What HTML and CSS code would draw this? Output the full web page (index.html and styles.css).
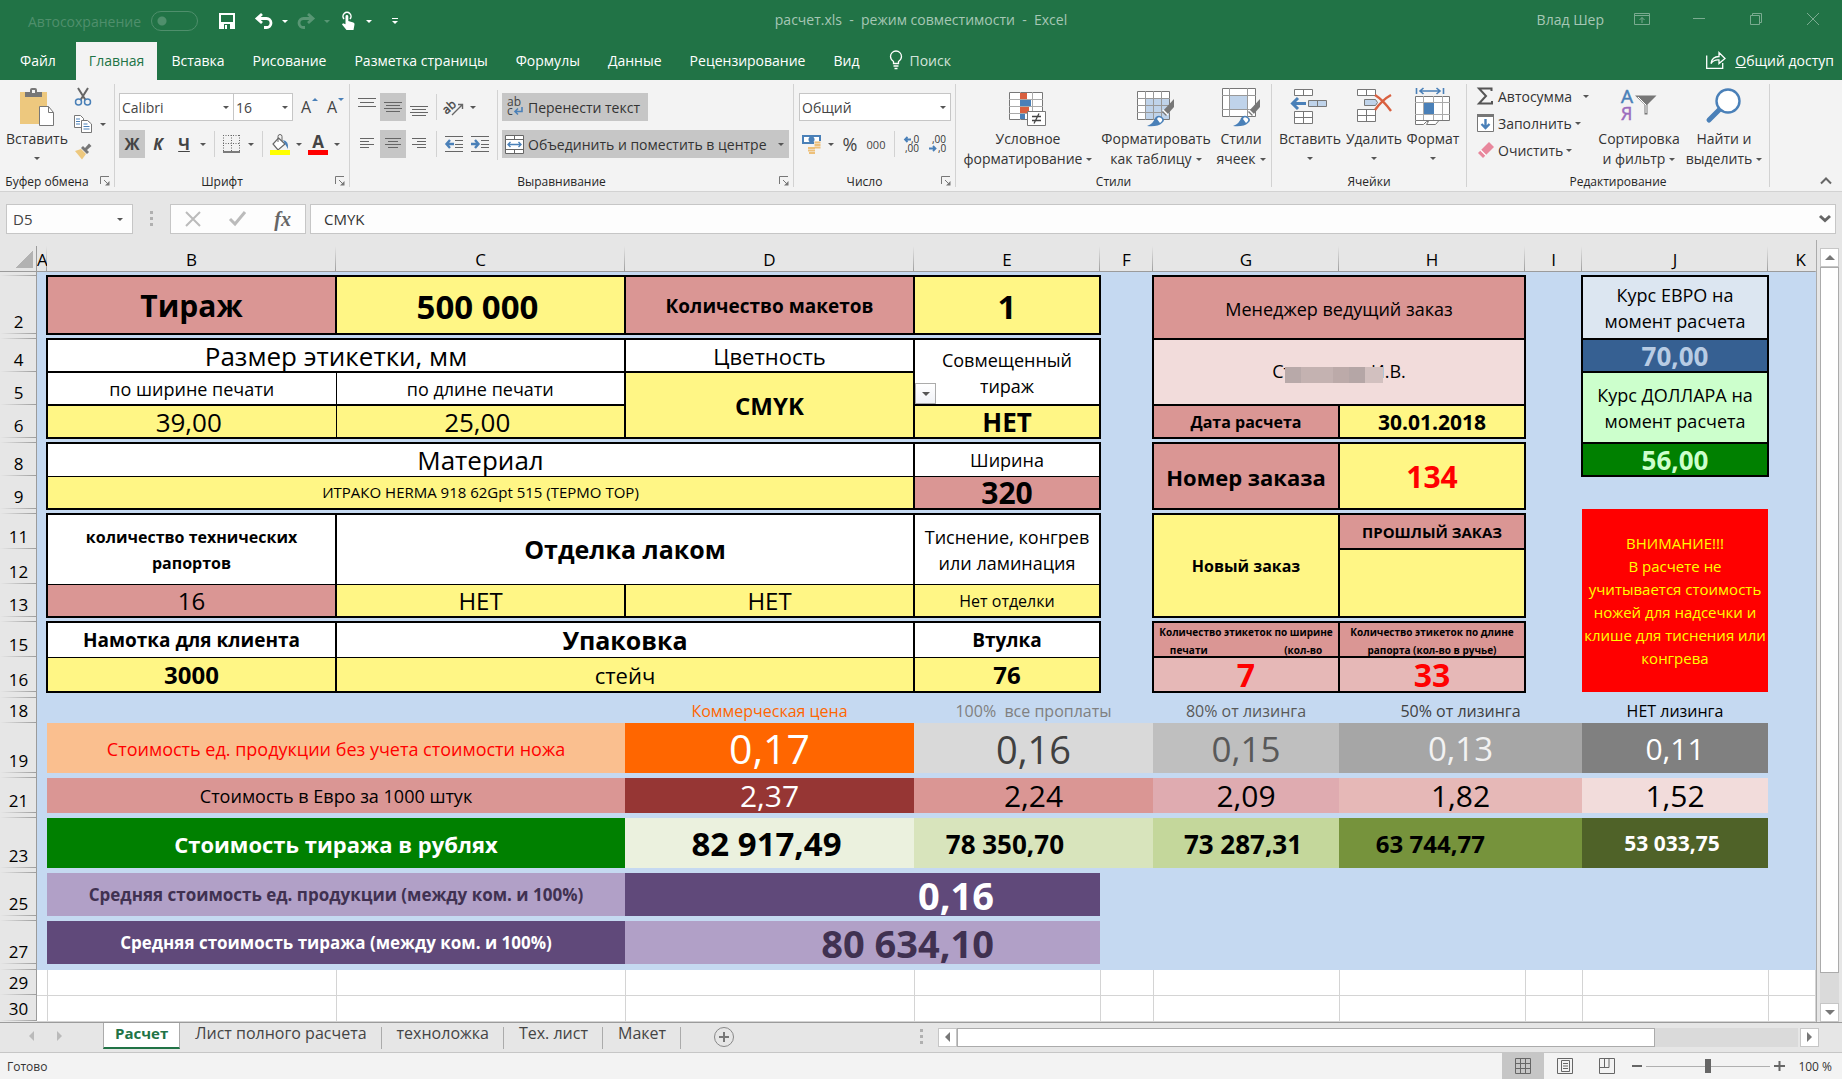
FILE: index.html
```html
<!DOCTYPE html>
<html lang="ru">
<head>
<meta charset="utf-8">
<meta name="viewport" content="width=device-width, initial-scale=1">
<title>расчет.xls - режим совместимости - Excel</title>
<link rel="stylesheet" href="styles.css">
</head>
<body>
<header class="titlebar">
  <div class="quick">
    <label class="autosave" for="autosave">Автосохранение</label>
    <input class="toggle" type="checkbox" id="autosave" disabled>
    <button class="qbtn save" aria-label="Сохранить"><svg width="16" height="16" viewBox="0 0 16 16"><path d="M1 1h14v14H1z" fill="none" stroke="#fff" stroke-width="2"/><path d="M2 9h12v6H2z" fill="#fff"/><path d="M5 11h6v5H5z" fill="#217346"/><path d="M6 12h2v4H6z" fill="#fff"/></svg></button>
    <button class="qbtn" aria-label="Отменить"><svg width="18" height="16" viewBox="0 0 18 16"><path d="M7 1L2 5.500l5 4.500M2 5.500h9.500a4.500 4.500 0 0 1 0 9H9" fill="none" stroke="#fff" stroke-width="2.800"/></svg></button>
    <button class="qdrop" aria-label="Список отмены"><i class="caret"></i></button>
    <button class="qbtn dim" aria-label="Повторить"><svg width="18" height="16" viewBox="0 0 18 16"><path d="M11 1l5 4.500L11 10M16 5.500H6.500a4.500 4.500 0 0 0 0 9H8" fill="none" stroke="#fff" stroke-width="2.800"/></svg></button>
    <button class="qdrop dim" aria-label="Список повтора"><i class="caret"></i></button>
    <button class="qbtn" aria-label="Режим касания"><svg width="15" height="18" viewBox="0 0 15 18"><path d="M3 7a4 4 0 1 1 6 0" fill="none" stroke="#fff" stroke-width="1.500"/><path d="M4.500 4.500a1.400 1.400 0 0 1 2.800 0V9l5 1.500q1.500.6 1.200 2L12.500 18H5.500L1 12.500l1-1.200 2.500 1z" fill="#fff"/></svg></button>
    <button class="qdrop" aria-label="Режимы"><i class="caret"></i></button>
    <button class="qdrop more" aria-label="Настройка панели"><i class="bar"></i><i class="caret"></i></button>
  </div>
  <div class="doc-title">расчет.xls&nbsp; -&nbsp; режим совместимости&nbsp; -&nbsp; Excel</div>
  <div class="window-tools">
    <span class="user">Влад Шер</span>
    <button aria-label="Параметры ленты"><svg width="16" height="12" viewBox="0 0 16 12"><path d="M.5.5h15v11H.5zM.5 2.500h15M8 10V4.500M5.500 7L8 4.500 10.500 7" fill="none" stroke="#fff"/></svg></button>
    <button aria-label="Свернуть"><svg width="12" height="12" viewBox="0 0 12 12"><path d="M0 5.500h12" stroke="#fff"/></svg></button>
    <button aria-label="Восстановить"><svg width="12" height="12" viewBox="0 0 12 12"><path d="M.5 2.500h9v9h-9zM2.500 2.500v-2h9v9h-2" fill="none" stroke="#fff"/></svg></button>
    <button aria-label="Закрыть"><svg width="12" height="12" viewBox="0 0 12 12"><path d="M0 0l12 12M12 0L0 12" stroke="#fff"/></svg></button>
  </div>
</header>
<nav class="tabs">
  <a href="#file">Файл</a>
  <a href="#home" class="active">Главная</a>
  <a href="#insert">Вставка</a>
  <a href="#draw">Рисование</a>
  <a href="#layout">Разметка страницы</a>
  <a href="#formulas">Формулы</a>
  <a href="#data">Данные</a>
  <a href="#review">Рецензирование</a>
  <a href="#view">Вид</a>
  <a href="#search" class="search"><svg width="14" height="20" viewBox="0 0 14 20"><path d="M4.500 13.500v-2Q1.500 9.500 1.500 6.500a5.500 5.500 0 0 1 11 0q0 3-3 5v2zM4.500 16h5M5.500 18.500h3" fill="none" stroke="#fff" stroke-width="1.300"/></svg>Поиск</a>
  <a href="#share" class="share"><svg width="20" height="18" viewBox="0 0 20 18"><path d="M.7 4.500v12.800h16V12" fill="none" stroke="#fff" stroke-width="1.300"/><path d="M5 12.500q1-7 8-7V1.500L19 7.500l-6 5V9q-5-.5-8 3.500z" fill="none" stroke="#fff" stroke-width="1.300"/></svg><span><u>О</u>бщий доступ</span></a>
</nav>

<section class="ribbon" aria-label="Лента">
  <div class="group g-clip">
    <div class="body">
      <button class="big paste"><svg width="36" height="40" viewBox="0 0 36 40"><path d="M1 4h27v32H1z" fill="#edc87e"/><path d="M6 4h5V2q0-2 2-2h3q2 0 2 2v2h5v5H6z" fill="#777"/><path d="M13 2h3v3h-3z" fill="#f3f3f3"/><path d="M20.500 18.500h9l5 6v13h-14z" fill="#fff" stroke="#777"/><path d="M29.500 18.500v6h5" fill="none" stroke="#777"/></svg><span>Вставить</span><i class="caret"></i></button>
      <div class="stack">
        <button class="mini" aria-label="Вырезать"><svg width="18" height="18" viewBox="0 0 18 18"><path d="M4 0l7.500 12M14 0L6.500 12" stroke="#666" stroke-width="2"/><circle cx="4.500" cy="14" r="3" fill="none" stroke="#4a80b8" stroke-width="1.500"/><circle cx="13.500" cy="14" r="3" fill="none" stroke="#4a80b8" stroke-width="1.500"/></svg></button>
        <button class="mini" aria-label="Копировать"><svg width="18" height="18" viewBox="0 0 18 18"><path d="M.5.500h6l3 3v9h-9z" fill="#fff" stroke="#777"/><path d="M2 4h4M2 6.500h4M2 9h4" stroke="#4a80b8"/><path d="M7.500 5.500h6l4 3.500v8.500h-10z" fill="#fff" stroke="#777"/><path d="M9.500 9h4M9.500 11.500h6M9.500 14h6" stroke="#4a80b8"/></svg><i class="caret"></i></button>
        <button class="mini" aria-label="Формат по образцу"><svg width="18" height="18" viewBox="0 0 18 18"><path d="M1 9l6-2 5 5-4 5.500z" fill="#edc87e"/><path d="M7 6l2-2 2 2 4-4.500L17.500 4 13 8l2 2-2 2z" fill="#777"/></svg></button>
      </div>
    </div>
    <div class="caption has-launcher">Буфер обмена<button class="launcher" aria-label="Буфер обмена: параметры"><svg width="10" height="10" viewBox="0 0 10 10"><path d="M.5 8V.500H9M4 4l4 4" fill="none" stroke="#777"/><path d="M9.500 5v4.500H5z" fill="#777"/></svg></button></div>
  </div>

  <div class="group g-font">
    <div class="body rows">
      <div class="row">
        <select class="combo font-name" aria-label="Шрифт"><option>Calibri</option></select>
        <select class="combo font-size" aria-label="Размер шрифта"><option>16</option></select>
        <button class="tool" aria-label="Увеличить размер"><span class="grow">A</span><i class="tri up"></i></button>
        <button class="tool" aria-label="Уменьшить размер"><span class="grow">A</span><i class="tri down"></i></button>
      </div>
      <div class="row">
        <button class="tool on"><b>Ж</b></button>
        <button class="tool"><b><em>К</em></b></button>
        <button class="tool"><b><u>Ч</u></b></button>
        <button class="drop" aria-label="Подчеркивание"><i class="caret"></i></button>
        <i class="sep"></i>
        <button class="tool" aria-label="Границы"><svg width="18" height="18" viewBox="0 0 18 18"><path d="M.5 0v16M8.500 0v16M16.500 0v16M0 .500h17M0 8.500h17" stroke="#666" stroke-dasharray="1 1.500"/><path d="M0 17h17" stroke="#555" stroke-width="1.500"/></svg></button>
        <button class="drop" aria-label="Виды границ"><i class="caret"></i></button>
        <i class="sep"></i>
        <button class="tool" aria-label="Цвет заливки"><svg width="20" height="21" viewBox="0 0 20 21"><path d="M8.500 4L15 10l-7 6-5-6z" fill="#fff" stroke="#666" stroke-width="1.200"/><path d="M8 8V2.500q0-2 2-2t2 2V7" fill="none" stroke="#666"/><path d="M13 6q6 1 5 9l-3-5z" fill="#4a80b8"/><path d="M0 16h20v5H0z" fill="#ff0"/></svg></button>
        <button class="drop" aria-label="Цвета заливки"><i class="caret"></i></button>
        <button class="tool fontcolor" aria-label="Цвет текста"><b>А</b><i class="swatch"></i></button>
        <button class="drop" aria-label="Цвета текста"><i class="caret"></i></button>
      </div>
    </div>
    <div class="caption has-launcher">Шрифт<button class="launcher" aria-label="Шрифт: параметры"><svg width="10" height="10" viewBox="0 0 10 10"><path d="M.5 8V.500H9M4 4l4 4" fill="none" stroke="#777"/><path d="M9.500 5v4.500H5z" fill="#777"/></svg></button></div>
  </div>

  <div class="group g-align">
    <div class="body">
      <div class="rows">
        <div class="row">
          <button class="tool" aria-label="По верхнему краю"><svg width="18" height="18" viewBox="0 0 18 18"><path d="M0 .500h18M2 4.500h14M0 8.500h18" stroke="#666"/></svg></button>
          <button class="tool on" aria-label="По середине"><svg width="18" height="18" viewBox="0 0 18 18"><path d="M0 4.500h18M2 7.500h14M0 10.500h18M2 13.500h14" stroke="#666"/></svg></button>
          <button class="tool" aria-label="По нижнему краю"><svg width="18" height="18" viewBox="0 0 18 18"><path d="M0 8.500h18M2 11.500h14M0 14.500h18M2 17.500h14" stroke="#666"/></svg></button>
          <i class="sep"></i>
          <button class="tool" aria-label="Ориентация"><svg width="20" height="18" viewBox="0 0 20 18"><text x="-2" y="13" font-size="12" transform="rotate(-42 5 9)" fill="#444" stroke="#444" stroke-width=".4">ab</text><path d="M8 17L18 7M14 6.500h4.500V11" fill="none" stroke="#666" stroke-width="1.400"/></svg></button>
          <button class="drop" aria-label="Варианты ориентации"><i class="caret"></i></button>
        </div>
        <div class="row">
          <button class="tool" aria-label="По левому краю"><svg width="14" height="14" viewBox="0 0 14 14"><path d="M0 1.500h14M0 4.500h9M0 7.500h14M0 10.500h9" stroke="#666"/></svg></button>
          <button class="tool on" aria-label="По центру"><svg width="16" height="14" viewBox="0 0 16 14"><path d="M0 1.500h16M3 4.500h10M0 7.500h16M3 10.500h10" stroke="#666"/></svg></button>
          <button class="tool" aria-label="По правому краю"><svg width="14" height="14" viewBox="0 0 14 14"><path d="M0 1.500h14M5 4.500h9M0 7.500h14M5 10.500h9" stroke="#666"/></svg></button>
          <i class="sep"></i>
          <button class="tool" aria-label="Уменьшить отступ"><svg width="18" height="18" viewBox="0 0 18 18"><path d="M0 1.500h18M10 5.500h8M10 9.500h8M10 12.500h8M0 16.500h18" stroke="#666"/><path d="M9 9H2M5 5L1.500 9 5 13" fill="none" stroke="#4a80b8" stroke-width="2.400"/></svg></button>
          <button class="tool" aria-label="Увеличить отступ"><svg width="18" height="18" viewBox="0 0 18 18"><path d="M0 1.500h18M10 5.500h8M10 9.500h8M10 12.500h8M0 16.500h18" stroke="#666"/><path d="M0 9h7M4 5l3.500 4L4 13" fill="none" stroke="#4a80b8" stroke-width="2.400"/></svg></button>
        </div>
      </div>
      <i class="sep tall"></i>
      <div class="rows">
        <button class="wide on"><svg width="18" height="20" viewBox="0 0 18 20"><text x="1" y="9" font-size="12" fill="#444">ab</text><text x="1" y="18" font-size="12" fill="#444">c</text><path d="M16 10v4.500H9M12 11.500l-3 3 3 3" fill="none" stroke="#4a80b8" stroke-width="1.600"/></svg>Перенести текст</button>
        <button class="wide on merge"><svg width="19" height="19" viewBox="0 0 19 19"><path d="M.5.500h18v18H.500zM.5 4.500h18M.5 14.500h18M9.500.500v4M9.500 14.500v4" fill="#fff" stroke="#666"/><path d="M3 9.500h13M5.500 7L3 9.500 5.500 12M13.500 7L16 9.500 13.500 12" fill="none" stroke="#4a80b8" stroke-width="1.400"/></svg>Объединить и поместить в центре<i class="caret"></i></button>
      </div>
    </div>
    <div class="caption has-launcher">Выравнивание<button class="launcher" aria-label="Выравнивание: параметры"><svg width="10" height="10" viewBox="0 0 10 10"><path d="M.5 8V.500H9M4 4l4 4" fill="none" stroke="#777"/><path d="M9.500 5v4.500H5z" fill="#777"/></svg></button></div>
  </div>

  <div class="group g-number">
    <div class="body rows">
      <div class="row"><select class="combo format" aria-label="Числовой формат"><option>Общий</option></select></div>
      <div class="row">
        <button class="tool" aria-label="Финансовый формат"><svg width="20" height="20" viewBox="0 0 20 20"><path d="M0 1h19v9H0z" fill="#4a80b8"/><path d="M2 3h15v5H2z" fill="#fff"/><circle cx="9.500" cy="5.500" r="3" fill="#4a80b8"/><path d="M12 7h7v10h-7z" fill="#f3f3f3"/><path d="M12.500 8.500h6M12.500 11h6M12.500 13.500h6M6 14h7M6 16.500h7M7 19h6" stroke="#edc07a" stroke-width="2"/></svg></button>
        <button class="drop" aria-label="Финансовые форматы"><i class="caret"></i></button>
        <button class="tool percent">%</button>
        <button class="tool small">000</button>
        <i class="sep"></i>
        <button class="tool" aria-label="Увеличить разрядность"><svg width="18" height="20" viewBox="0 0 18 20"><text x="8" y="9" font-size="10" fill="#333">,0</text><text x="2" y="18" font-size="10" fill="#333">,00</text><path d="M8 5.500H2M4.500 3L2 5.500 4.500 8" fill="none" stroke="#4a80b8" stroke-width="1.800"/></svg></button>
        <button class="tool" aria-label="Уменьшить разрядность"><svg width="18" height="20" viewBox="0 0 18 20"><text x="3" y="9" font-size="10" fill="#333">,00</text><text x="9" y="18" font-size="10" fill="#333">,0</text><path d="M0 14.500h6M4 12l2.500 2.500L4 17" fill="none" stroke="#4a80b8" stroke-width="1.800"/></svg></button>
      </div>
    </div>
    <div class="caption has-launcher">Число<button class="launcher" aria-label="Число: параметры"><svg width="10" height="10" viewBox="0 0 10 10"><path d="M.5 8V.500H9M4 4l4 4" fill="none" stroke="#777"/><path d="M9.500 5v4.500H5z" fill="#777"/></svg></button></div>
  </div>

  <div class="group g-styles">
    <div class="body">
      <button class="big cond"><svg width="38" height="40" viewBox="0 0 38 40"><path d="M.5 4.500h33v27H.500z" fill="#fff" stroke="#777"/><path d="M0 11.500h34M0 18.500h34M0 25.500h34M11.500 4v28M23.500 4v28" stroke="#aaa"/><path d="M11 5h7v6h-7zM11 19h9v6h-9z" fill="#d9603f"/><path d="M11 12h11v6H11zM11 26h5v5h-5z" fill="#4a80b8"/><path d="M18.500 23.500h18v14h-18z" fill="#fff" stroke="#777"/><path d="M23 28.500h9M23 32.500h9M30 25.500l-5 10" stroke="#444" stroke-width="1.300"/></svg><span>Условное</span><span>форматирование <i class="caret"></i></span></button>
      <button class="big fmt"><svg width="38" height="40" viewBox="0 0 38 40"><path d="M.5 3.500h32v28H.500z" fill="#fff" stroke="#777"/><path d="M9 11h23v20H9z" fill="#bfd3ea"/><path d="M0 10.500h33M0 17.500h33M0 24.500h33M8.500 3v29M16.500 3v29M24.500 3v29" stroke="#999"/><path d="M37 11v8l-8 9-4-4z" fill="#777"/><path d="M26 22l5 5" stroke="#fff" stroke-width="1.500"/><path d="M10 38q7-3 8-8 3-4 7-1t0 6q-4 4-15 3z" fill="#4a80b8"/><path d="M20 31q1-3 4-1t-1 5z" fill="#fff"/></svg><span>Форматировать</span><span>как таблицу <i class="caret"></i></span></button>
      <button class="big cells"><svg width="38" height="40" viewBox="0 0 38 40"><path d="M.5.500h33v28H.500z" fill="#fff" stroke="#777"/><path d="M0 7.500h34M0 21.500h34M7.500 0v29M25.500 0v29" stroke="#999"/><path d="M8 8h17v13H8z" fill="#bfd3ea"/><path d="M38 11v8l-8 9-4-4z" fill="#777"/><path d="M27 22l5 5" stroke="#fff" stroke-width="1.500"/><path d="M11 38q7-3 8-8 3-4 7-1t0 6q-4 4-15 3z" fill="#4a80b8"/><path d="M21 31q1-3 4-1t-1 5z" fill="#fff"/></svg><span>Стили</span><span>ячеек <i class="caret"></i></span></button>
    </div>
    <div class="caption">Стили</div>
  </div>

  <div class="group g-cells">
    <div class="body">
      <button class="big ins"><svg width="38" height="40" viewBox="0 0 38 40"><path d="M3.500 1.500h18v6h-18zM12.500 1.500v6M3.500 23.500h18v12h-18zM12.500 23.500v12M3.500 29.500h18" fill="#fff" stroke="#777"/><path d="M17.500 12.500h18v6h-18z" fill="#bfd3ea" stroke="#777"/><path d="M26.500 12.500v6" stroke="#777"/><path d="M15 15.500H2M7 10l-5.500 5.500L7 21" fill="none" stroke="#4a80b8" stroke-width="3"/></svg><span>Вставить</span><i class="caret"></i></button>
      <button class="big del"><svg width="38" height="40" viewBox="0 0 38 40"><path d="M2.500 1.500h18v6h-18zM11.500 1.500v6M2.500 21.500h18v12h-18zM11.500 21.500v12M2.500 27.500h18" fill="#fff" stroke="#777"/><path d="M9.500 11.500h11l2 3-2 3h-11z" fill="#bfd3ea" stroke="#777"/><path d="M20 7q8 5 16 16M36 7q-9 5-16 15" fill="none" stroke="#d9603f" stroke-width="2.400"/></svg><span>Удалить</span><i class="caret"></i></button>
      <button class="big form"><svg width="36" height="40" viewBox="0 0 36 40"><path d="M1.500 0v6M28.500 0v6M5 3h20M8.500 0L5 3l3.500 3M21.500 0L25 3l-3.500 3" fill="none" stroke="#4a80b8" stroke-width="1.600"/><path d="M.5 8.500h34v24H.500z" fill="#fff" stroke="#777"/><path d="M0 14.500h35M0 26.500h35M8.500 8v24M18.500 8v24M27.500 8v24" stroke="#aaa"/><path d="M9 15h10v11H9z" fill="#4a80b8"/><path d="M.5 33v3.500h8l3-3h2l-2 3h9l3-3.500" fill="#fff" stroke="#777"/></svg><span>Формат</span><i class="caret"></i></button>
    </div>
    <div class="caption">Ячейки</div>
  </div>

  <div class="group g-edit">
    <div class="body">
      <div class="list">
        <button class="line"><svg width="18" height="18" viewBox="0 0 18 18"><path d="M14.500 4V1.500H2L9 9l-7 7.500h13V14" fill="none" stroke="#555" stroke-width="2"/></svg>Автосумма <i class="caret far"></i></button>
        <button class="line"><svg width="18" height="18" viewBox="0 0 18 18"><path d="M.5.500h16v17H.500z" fill="#fff" stroke="#777"/><path d="M0 0h17v3H0z" fill="#777"/><path d="M8.500 5v9M4.500 10l4 4 4-4" fill="none" stroke="#4a80b8" stroke-width="2.400"/></svg>Заполнить <i class="caret"></i></button>
        <button class="line"><svg width="18" height="18" viewBox="0 0 18 18"><path d="M1 12L12 1l5 5L6 17z" fill="#e8879c"/><path d="M3.500 9l5.500 5.500" stroke="#fff" stroke-width="1.200"/></svg>Очистить <i class="caret"></i></button>
      </div>
      <button class="big sort"><svg width="36" height="40" viewBox="0 0 36 40"><path d="M14 7.500h21.500l-9 9v10h-3v-10z" fill="#777"/><path d="M17 9l8 8v8" fill="none" stroke="#fff"/><text x="0" y="15" font-size="19" fill="#4a80b8" stroke="#4a80b8" stroke-width=".5">А</text><text x="0" y="32" font-size="18" fill="#9b6bbd" stroke="#9b6bbd" stroke-width=".5">Я</text></svg><span>Сортировка</span><span>и фильтр <i class="caret"></i></span></button>
      <button class="big find"><svg width="36" height="40" viewBox="0 0 36 40"><path d="M14 21L3 32" stroke="#4a80b8" stroke-width="5" stroke-linecap="round"/><circle cx="22" cy="13" r="11.500" fill="#fff" stroke="#4a80b8" stroke-width="2.400"/></svg><span>Найти и</span><span>выделить <i class="caret"></i></span></button>
    </div>
    <div class="caption">Редактирование</div>
  </div>
  <button class="collapse" aria-label="Свернуть ленту"><svg width="12" height="8" viewBox="0 0 12 8"><path d="M1 6.500l5-5 5 5" fill="none" stroke="#666" stroke-width="2"/></svg></button>
</section>

<section class="formula-bar" aria-label="Строка формул">
  <div class="namebox"><input type="text" value="D5" aria-label="Имя ячейки"><button class="drop" aria-label="Список имен"><i class="caret"></i></button></div>
  <i class="dots"></i>
  <div class="fx-buttons">
    <button aria-label="Отмена"><svg width="16" height="16" viewBox="0 0 16 16"><path d="M1 1l14 14M15 1L1 15" stroke="#bbb" stroke-width="2"/></svg></button>
    <button aria-label="Ввод"><svg width="18" height="16" viewBox="0 0 18 16"><path d="M1 8l5 5L16 1" fill="none" stroke="#bbb" stroke-width="3"/></svg></button>
    <button class="fx" aria-label="Вставить функцию">fx</button>
  </div>
  <div class="fx-input"><input type="text" value="CMYK" aria-label="Формула"><button class="drop" aria-label="Развернуть"><svg width="12" height="8" viewBox="0 0 12 8"><path d="M1 1l5 4.500L11 1" fill="none" stroke="#666" stroke-width="3"/></svg></button></div>
</section>

<main class="workspace">
  <div class="sheet">
    <table>
      <colgroup><col class="c-head"><col class="c-a"><col class="c-b"><col class="c-b"><col class="c-b"><col class="c-e"><col class="c-f"><col class="c-e"><col class="c-e"><col class="c-i"><col class="c-e"><col></colgroup>
      <thead>
        <tr><th class="corner"></th><th class="col-a">A</th><th>B</th><th>C</th><th>D</th><th>E</th><th>F</th><th>G</th><th>H</th><th>I</th><th>J</th><th class="col-k">K</th></tr>
      </thead>
      <tbody class="filled">
        <tr class="h4"><th></th><td colspan="11"></td></tr>
        <tr class="h58"><th>2</th><td></td><td class="bx rose f30 bold">Тираж</td><td class="bx yellow f33 bold num">500 000</td><td class="bx rose f19 bold">Количество макетов</td><td class="bx yellow f33 bold">1</td><td></td><td class="bx rose f18" colspan="2" rowspan="2">Менеджер ведущий заказ</td><td></td><td class="bx euro f18 multi" rowspan="2">Курс ЕВРО на<br>момент расчета</td><td></td></tr>
        <tr class="h5"><th></th><td colspan="6"></td><td></td><td></td></tr>
        <tr class="h33"><th>4</th><td></td><td class="bx white f26" colspan="2">Размер этикетки, мм</td><td class="bx white f22">Цветность</td><td class="bx white f18 multi anchor" rowspan="2">Совмещенный<br>тираж<button class="cell-drop" aria-label="Выбрать значение"><i class="caret"></i></button></td><td></td><td class="bx blush f18" colspan="2" rowspan="2">Ст<span class="mosaic"></span>И.В.</td><td></td><td class="bx euro-rate f26 bold">70,00</td><td></td></tr>
        <tr class="h33"><th>5</th><td></td><td class="bx white f18 r1">по ширине печати</td><td class="bx white f18 l1">по длине печати</td><td class="bx yellow f24 bold" rowspan="2">CMYK</td><td></td><td></td><td class="bx dollar f18 multi" rowspan="3">Курс ДОЛЛАРА на<br>момент расчета</td><td></td></tr>
        <tr class="h33"><th>6</th><td></td><td class="bx yellow f26 num r1">39,00</td><td class="bx yellow f26 num l1">25,00</td><td class="bx yellow f26 bold">НЕТ</td><td></td><td class="bx rose f16 bold">Дата расчета</td><td class="bx yellow f21 bold">30.01.2018</td><td></td><td></td></tr>
        <tr class="h5"><th></th><td colspan="9"></td><td></td></tr>
        <tr class="h33"><th>8</th><td></td><td class="bx white f26 b1" colspan="3">Материал</td><td class="bx white f18 b1">Ширина</td><td></td><td class="bx rose f22 bold" rowspan="2">Номер заказа</td><td class="bx yellow f30 bold red" rowspan="2">134</td><td></td><td class="bx dollar-rate f26 bold">56,00</td><td></td></tr>
        <tr class="h33"><th>9</th><td></td><td class="bx yellow f15 t1" colspan="3">ИТРАКО HERMA 918 62Gpt 515 (ТЕРМО TOP)</td><td class="bx rose f30 bold t1">320</td><td></td><td></td><td></td><td></td></tr>
        <tr class="h5"><th></th><td colspan="9"></td><td class="warning" rowspan="7">ВНИМАНИЕ!!!<br>В расчете не учитывается стоимость ножей для надсечки и клише для тиснения или конгрева</td><td></td></tr>
        <tr class="h35"><th>11</th><td></td><td class="bx white f16 bold multi b1" rowspan="2">количество технических<br>рапортов</td><td class="bx white f25 bold b1" colspan="2" rowspan="2">Отделка лаком</td><td class="bx white f18 multi b1" rowspan="2">Тиснение, конгрев<br>или ламинация</td><td></td><td class="bx yellow f16 bold" rowspan="3">Новый заказ</td><td class="bx rose f15 bold">ПРОШЛЫЙ ЗАКАЗ</td><td></td><td></td></tr>
        <tr class="h35"><th>12</th><td></td><td></td><td class="bx yellow" rowspan="2"></td><td></td><td></td></tr>
        <tr class="h33"><th>13</th><td></td><td class="bx rose f24 t1">16</td><td class="bx yellow f24 t1">НЕТ</td><td class="bx yellow f24 t1">НЕТ</td><td class="bx yellow f16 t1">Нет отделки</td><td></td><td></td><td></td></tr>
        <tr class="h5"><th></th><td colspan="9"></td><td></td></tr>
        <tr class="h35"><th>15</th><td></td><td class="bx white f19 bold b1">Намотка для клиента</td><td class="bx white f25 bold b1" colspan="2">Упаковка</td><td class="bx white f19 bold b1">Втулка</td><td></td><td class="bx rose tiny"><div>Количество этикеток по ширине<br>печати <span class="spread">(кол-во</span></div></td><td class="bx rose tiny"><div>Количество этикеток по длине<br>рапорта (кол-во в ручье)</div></td><td></td><td></td></tr>
        <tr class="h35"><th>16</th><td></td><td class="bx yellow f24 bold t1">3000</td><td class="bx yellow f22 t1" colspan="2">стейч</td><td class="bx yellow f24 bold t1">76</td><td></td><td class="bx pink f32 bold red">7</td><td class="bx pink f32 bold red">33</td><td></td><td></td></tr>
        <tr class="h6"><th></th><td colspan="11"></td></tr>
        <tr class="h25 f16"><th>18</th><td colspan="3"></td><td class="t-orange">Коммерческая цена</td><td class="t-gray" colspan="2">100%&nbsp; все проплаты</td><td class="t-dark">80% от лизинга</td><td class="t-darker" colspan="2">50% от лизинга</td><td>НЕТ лизинга</td><td></td></tr>
        <tr class="h50"><th>19</th><td></td><td class="peach f18 red" colspan="2">Стоимость ед. продукции без учета стоимости ножа</td><td class="orange f41">0,17</td><td class="gray1 f38" colspan="2">0,16</td><td class="gray2 f35">0,15</td><td class="gray3 f33" colspan="2">0,13</td><td class="gray4 f30">0,11</td><td></td></tr>
        <tr class="h5"><th></th><td colspan="11"></td></tr>
        <tr class="h35"><th>21</th><td></td><td class="rose f18" colspan="2">Стоимость в Евро за 1000 штук</td><td class="maroon f30">2,37</td><td class="rose f30" colspan="2">2,24</td><td class="rose2 f30">2,09</td><td class="pink f30" colspan="2">1,82</td><td class="blush f30">1,52</td><td></td></tr>
        <tr class="h5"><th></th><td colspan="11"></td></tr>
        <tr class="h50 bold"><th>23</th><td></td><td class="green f22" colspan="2">Стоимость тиража в рублях</td><td class="lime1 f33 num">82 917,49</td><td class="lime2 f26 shift-e" colspan="2">78 350,70</td><td class="lime3 f26 num">73 287,31</td><td class="lime4 f24 shift-h" colspan="2">63 744,77</td><td class="lime5 f21 num">53 033,75</td><td></td></tr>
        <tr class="h5"><th></th><td colspan="11"></td></tr>
        <tr class="h43 bold"><th>25</th><td></td><td class="lilac f17" colspan="2">Средняя стоимость ед. продукции (между ком. и 100%)</td><td class="violet f38 shift-d" colspan="2">0,16</td><td colspan="6"></td></tr>
        <tr class="h5"><th></th><td colspan="11"></td></tr>
        <tr class="h43 bold"><th>27</th><td></td><td class="violet f17" colspan="2">Средняя стоимость тиража (между ком. и 100%)</td><td class="lilac f38 shift-d" colspan="2">80 634,10</td><td colspan="6"></td></tr>
        <tr class="h6"><th></th><td colspan="11"></td></tr>
      </tbody>
      <tbody class="empty">
        <tr class="h25"><th>29</th><td></td><td></td><td></td><td></td><td></td><td></td><td></td><td></td><td></td><td></td><td></td></tr>
        <tr class="h26"><th>30</th><td></td><td></td><td></td><td></td><td></td><td></td><td></td><td></td><td></td><td></td><td></td></tr>
      </tbody>
    </table>
  </div>
  <div class="vscroll">
    <button aria-label="Вверх"><i class="arr up"></i></button>
    <div class="track"><div class="thumb"></div></div>
    <button aria-label="Вниз"><i class="arr down"></i></button>
  </div>
</main>

<footer>
  <div class="sheetbar">
    <div class="nav"><button aria-label="Предыдущий лист"><i class="arr left"></i></button><button aria-label="Следующий лист"><i class="arr right"></i></button></div>
    <nav class="sheet-tabs">
      <a href="#s1" class="current">Расчет</a>
      <a href="#s2">Лист полного расчета</a>
      <a href="#s3">техноложка</a>
      <a href="#s4">Тех. лист</a>
      <a href="#s5">Макет</a>
    </nav>
    <button class="add" aria-label="Новый лист"><svg width="22" height="22" viewBox="0 0 22 22"><circle cx="11" cy="11" r="9.500" fill="none" stroke="#888"/><path d="M11 6v10M6 11h10" stroke="#777" stroke-width="2"/></svg></button>
    <div class="hscroll">
      <i class="dots"></i>
      <button aria-label="Влево"><i class="arr left"></i></button>
      <div class="track"><div class="thumb"></div></div>
      <button aria-label="Вправо"><i class="arr right"></i></button>
    </div>
  </div>
  <div class="status">
    <span>Готово</span>
    <div class="views">
      <button class="on" aria-label="Обычный"><svg width="16" height="16" viewBox="0 0 16 16"><path d="M.5.500h15v15H.500zM.5 5.500h15M.5 10.500h15M5.500.500v15M10.500.500v15" fill="none" stroke="#666"/></svg></button>
      <button aria-label="Разметка страницы"><svg width="16" height="16" viewBox="0 0 16 16"><path d="M.5.500h15v15H.500zM4.500 2.500h8v11h-8zM6 5.500h5M6 8h5M6 10.500h5" fill="none" stroke="#666"/></svg></button>
      <button aria-label="Страничный режим"><svg width="16" height="16" viewBox="0 0 16 16"><path d="M.5.500h15v15H.500zM.5 9.500h9.500v-9M5.500.500v9" fill="none" stroke="#666"/></svg></button>
    </div>
    <div class="zoom">
      <button aria-label="Уменьшить масштаб"><svg width="10" height="12" viewBox="0 0 10 12"><path d="M0 6h10" stroke="#666" stroke-width="2"/></svg></button>
      <input type="range" min="0" max="100" value="50" aria-label="Масштаб">
      <button aria-label="Увеличить масштаб"><svg width="12" height="12" viewBox="0 0 12 12"><path d="M0 6h11M5.500 1v10" stroke="#666" stroke-width="2"/></svg></button>
      <span>100 %</span>
    </div>
  </div>
</footer>
</body>
</html>
```

FILE: styles.css
```css
* { box-sizing: border-box; }

body {
  margin: 0;
  min-height: 100vh;
  display: flex;
  flex-direction: column;
  font-family: "Open Sans", "Noto Sans", sans-serif;
  font-size: 14px;
  color: #333;
  background: #e6e6e6;
}

button, input, select {
  font: inherit;
  color: inherit;
  margin: 0;
  padding: 0;
  border: 0;
  background: none;
}

button { display: inline-flex; align-items: center; justify-content: center; }
svg { display: block; flex: none; overflow: visible; }
a { color: inherit; text-decoration: none; }

.caret {
  display: inline-block;
  flex: none;
  width: 0;
  height: 0;
  border: 3px solid transparent;
  border-top: 3px solid #555;
  border-bottom: 0;
}

/* Title bar */
.titlebar {
  display: grid;
  grid-template-columns: 1fr auto 1fr;
  align-items: center;
  height: 42px;
  background: #217346;
  color: #a6c7b5;
}
.quick { display: flex; align-items: center; padding-left: 28px; height: 38px; }
.autosave { color: #4f8f6c; width: 123px; white-space: nowrap; }
.toggle {
  appearance: none;
  width: 47px;
  height: 20px;
  border: 1px solid #4f8f6c;
  border-radius: 10px;
  background: radial-gradient(circle at 10px 9px, #4f8f6c 4px, transparent 5px);
}
.qbtn { width: 22px; height: 24px; }
.save { margin: 0 15px 0 18px; }
.qdrop { width: 20px; height: 24px; flex-direction: column; gap: 2px; }
.qdrop .caret { border-top-color: #fff; }
.more { margin-left: 6px; }
.bar { width: 6px; height: 1px; background: #fff; }
.dim { opacity: 0.25; }
.doc-title { white-space: nowrap; padding-bottom: 3px; }
.window-tools { display: flex; align-items: center; justify-content: flex-end; padding: 0 14px 4px 0; }
.window-tools button { width: 57px; height: 20px; opacity: 0.4; }
.window-tools .user { margin-right: 9px; }
.window-tools button:last-child { width: 31px; margin-left: 13px; }

/* Ribbon tabs */
.tabs {
  display: flex;
  height: 38px;
  background: #217346;
  color: #fff;
}
.tabs a { display: flex; align-items: center; padding: 0 14px 2px; white-space: nowrap; }
.tabs a:first-child { padding: 0 20px 2px; }
.tabs .active { padding: 0 13px 2px; background: #f3f3f3; color: #217346; }
.tabs .search { gap: 6px; color: #d3e3da; padding-left: 16px; }
.tabs .share { margin-left: auto; gap: 9px; padding-right: 8px; }

/* Ribbon */
.ribbon {
  display: flex;
  height: 112px;
  padding: 4px 0;
  background: #f3f3f3;
  border-bottom: 1px solid #d2d2d2;
}
.group { display: flex; flex-direction: column; flex: none; border-right: 1px solid #d2d2d2; }
.body { display: flex; flex: 1; }
.caption { position: relative; height: 18px; line-height: 22px; font-size: 12px; text-align: center; color: #262626; margin-bottom: -2px; }
.has-launcher { padding-right: 20px; }
.launcher { position: absolute; right: 4px; top: 5px; }
.g-clip { width: 115px; }
.g-font { width: 235px; }
.g-align { width: 444px; }
.g-number { width: 162px; }
.g-styles { width: 316px; }
.g-cells { width: 195px; }
.g-edit { width: 303px; }
.g-font .body, .g-align .body { padding-left: 4px; }
.g-number .body { padding-left: 5px; }
.g-styles .body { padding-left: 2px; }
.g-cells .body { padding-left: 5px; }
.g-edit .body { padding-left: 9px; }

.big { flex-direction: column; justify-content: flex-start; padding-top: 4px; line-height: 20px; white-space: nowrap; }
.big > span { display: flex; align-items: center; gap: 4px; }
.big > svg { margin-bottom: 1px; }
.big > .caret { margin-top: 8px; }
.paste { width: 74px; }
.cond { width: 140px; }
.fmt { width: 116px; }
.cells { width: 54px; }
.ins { width: 66px; }
.del { width: 62px; }
.form { width: 56px; }
.sort { width: 84px; }
.find { width: 86px; }
.stack { display: flex; flex-direction: column; gap: 7px; padding-top: 3px; }
.mini { height: 20px; gap: 8px; justify-content: flex-start; }

.rows { display: flex; flex-direction: column; gap: 9px; padding-top: 9px; align-items: flex-start; }
.row { display: flex; height: 28px; align-items: center; }
.tool { position: relative; width: 26px; height: 28px; font-size: 16px; color: #444; }
.drop { width: 12px; height: 28px; }
.on { background: #c6c6c6; }
.sep { width: 1px; height: 26px; margin: 0 4px 0 5px; background: #d2d2d2; }
.g-align .row .sep { margin-left: 4px; }
.sep.tall { height: 70px; margin: 6px 4px 0 4px; }
.g-align .body > .rows:first-child { width: 139px; }
.combo {
  appearance: none;
  height: 28px;
  padding: 0 2px;
  border: 1px solid #c6c6c6;
  border-radius: 0;
  color: #444;
  background: #fff url("data:image/svg+xml,%3Csvg xmlns='http://www.w3.org/2000/svg' width='6' height='3'%3E%3Cpath d='M0 0h6L3 3z' fill='%23555'/%3E%3C/svg%3E") no-repeat right 4px center;
}
.font-name { width: 115px; margin-right: -1px; }
.font-size { width: 60px; }
.format { width: 152px; }
.combo + .tool { margin-left: 2px; }
.grow { font-size: 16px; line-height: 20px; padding-right: 4px; }
.tri { position: absolute; top: 5px; right: 3px; border: 3px solid transparent; }
.tri.up { border-top: 0; border-bottom-color: #4a80b8; }
.tri.down { border-bottom: 0; border-top-color: #4a80b8; }
.small { font-size: 11px; }
.percent { font-size: 18px; }
.fontcolor { flex-direction: column; font-size: 17px; line-height: 17px; }
.swatch { width: 20px; height: 5px; background: #f00; }
.wide { height: 28px; padding: 0 8px 0 4px; gap: 4px; white-space: nowrap; }
.merge { padding: 0 5px 0 3px; }
.merge .caret { margin-left: 7px; }

.list { display: flex; flex-direction: column; width: 121px; gap: 3px; padding: 0 0 0 1px; align-items: flex-start; }
.line { height: 24px; gap: 3px; white-space: nowrap; }
.far { margin-left: 8px; }
.collapse { margin: auto 10px 0 auto; height: 12px; }

/* Formula bar */
.formula-bar { display: flex; height: 48px; padding: 12px 6px 6px; font-size: 15px; }
.namebox, .fx-buttons, .fx-input { display: flex; align-items: center; background: #fdfdfd; border: 1px solid #c6c6c6; height: 30px; }
.namebox { width: 127px; }
.namebox input { width: 107px; padding-left: 6px; color: #444; }
.dots { width: 3px; height: 16px; margin: 7px 17px 0 17px; background: repeating-linear-gradient(#b0b0b0 0 3px, transparent 3px 6px); }
.fx-buttons { width: 136px; justify-content: space-around; }
.fx-buttons button { width: 44px; }
.fx { font: italic bold 20px/20px "Liberation Serif", serif; color: #666; }
.fx-input { flex: 1; margin-left: 4px; }
.fx-input input { flex: 1; padding-left: 13px; color: #333; }
.fx-input .drop { width: 20px; }

/* Worksheet */
.workspace { flex: 1; display: flex; border-bottom: 1px solid #9b9b9b; }
.sheet { flex: 1; min-width: 0; overflow: hidden; border-right: 1px solid #ababab; }
table { width: 100%; table-layout: fixed; border-collapse: collapse; color: #000; line-height: 1; }
td, th { padding: 0; font-weight: normal; text-align: center; vertical-align: middle; }
.c-head { width: 37px; }
.c-a { width: 10px; }
.c-b { width: 289px; }
.c-e { width: 186px; }
.c-f { width: 53px; }
.c-i { width: 57px; }

thead th {
  height: 32px;
  padding-top: 6px;
  font-size: 17px;
  background:
    linear-gradient(#9b9b9b, #9b9b9b) bottom / 100% 1px no-repeat,
    linear-gradient(#e6e6e6, #9b9b9b) right bottom / 1px 26px no-repeat,
    #e6e6e6;
}
thead .corner {
  background:
    linear-gradient(#9b9b9b, #9b9b9b) bottom / 100% 1px no-repeat,
    linear-gradient(#9b9b9b, #9b9b9b) right bottom / 1px 26px no-repeat,
    linear-gradient(135deg, transparent 50%, #b2b2b2 50%) 15px 10px / 18px 18px no-repeat,
    #e6e6e6;
}
thead .col-a { overflow: hidden; text-align: left; }
thead .col-k { padding-left: 18px; background: linear-gradient(#9b9b9b, #9b9b9b) bottom / 100% 1px no-repeat, #e6e6e6; }

tbody th {
  font-size: 17px;
  vertical-align: bottom;
  padding-bottom: 4px;
  font-weight: normal;
  background:
    linear-gradient(90deg, #e6e6e6, #9b9b9b) bottom / 100% 1px no-repeat,
    linear-gradient(#9b9b9b, #9b9b9b) right / 1px 100% no-repeat,
    #e6e6e6;
}
tbody th:empty { padding: 0; }
.bold th { font-weight: normal; }
.filled td { background-color: #c5d9f1; }
.empty td { background: #fff; border: 1px solid #d4d4d4; border-top: 0; }
.empty td:nth-child(2) { border-left: 0; }

.h4 { height: 4px; }
.h5 { height: 5px; }
.h6 { height: 6px; }
.h25 { height: 25px; }
.h26 { height: 26px; }
.h33 { height: 33px; }
.h35 { height: 35px; }
.h43 { height: 43px; }
.h50 { height: 50px; }
.h58 { height: 58px; }

.f15 { font-size: 15px; }
.f16 td, .f16 { font-size: 16px; }
.f17 { font-size: 17px; }
.f18 { font-size: 18px; }
.f19 { font-size: 19px; }
.f21 { font-size: 21px; }
.f22 { font-size: 22px; }
.f24 { font-size: 24px; }
.f25 { font-size: 25px; }
.f26 { font-size: 26px; }
.f30 { font-size: 30px; }
.f32 { font-size: 32px; }
.f33 { font-size: 33px; }
.f35 { font-size: 35px; }
.f38 { font-size: 38px; }
.f41 { font-size: 41px; }
.bold, .bold td { font-weight: bold; }

.bx { border: 2px solid #000; padding-top: 1px; }
.h58 .bx { padding-top: 2px; }
.h50 td { padding-top: 1px; }
.bx.multi { padding-top: 1px; line-height: 26px; }
.num { padding-right: 6px; }
.t1 { border-top-width: 1px; }
.b1 { border-bottom-width: 1px; }
.l1 { border-left-width: 1px; }
.r1 { border-right-width: 1px; }

.filled .white { background: #fff; }
.filled .rose { background: #da9694; }
.filled .rose2 { background: #dfabb0; }
.filled .pink { background: #e6b8b7; }
.filled .blush { background: #f2dcdb; }
.filled .yellow { background: #fff685; }
.filled .euro { background: #dce6f1; }
.filled .euro-rate { background: #366092; color: #b8cce4; }
.filled .dollar { background: #ccffcc; }
.filled .dollar-rate { background: #008000; color: #ccffcc; }
.filled .peach { background: #fabf8f; }
.filled .orange { background: #ff6600; color: #fff; }
.filled .gray1 { background: #d9d9d9; color: #404040; }
.filled .gray2 { background: #bfbfbf; color: #595959; }
.filled .gray3 { background: #a6a6a6; color: #f2f2f2; }
.filled .gray4 { background: #808080; color: #fff; }
.filled .maroon { background: #963634; color: #fff; }
.filled .green { background: #008000; color: #fff; }
.filled .lime1 { background: #ebf1de; }
.filled .lime2 { background: #d8e4bc; }
.filled .lime3 { background: #c4d79b; }
.filled .lime4 { background: #76933c; }
.filled .lime5 { background: #4f6228; color: #fff; }
.filled .lilac { background: #b1a0c7; color: #403151; }
.filled .violet { background: #60497a; color: #fff; }
.red { color: #f00; }
.t-orange { color: #ff6600; }
.t-gray { color: #808080; }
.t-dark { color: #595959; }
.t-darker { color: #404040; }
.filled .warning { background: #f00; color: #ff0; font-size: 15px; line-height: 23px; }

.shift-e, .shift-h, .shift-d { text-align: right; }
.shift-e { padding-right: 89px; }
.shift-h { padding-right: 97px; }
.shift-d { padding-right: 106px; }

.tiny { padding: 0; font-size: 10px; font-weight: bold; line-height: 18px; white-space: nowrap; }
.tiny div { height: 33px; overflow: hidden; }
.spread { padding-left: 74px; }
.mosaic {
  display: inline-block;
  position: relative;
  width: 98px;
  height: 16px;
  margin: 0 -12px 0 -7px;
  vertical-align: -5px;
  background: linear-gradient(90deg, #b8a9a9 0 16px, #c4b2b1 16px 48px, #bcaaa9 48px 64px, #b5a6a6 64px 80px, #d2c0bf 80px);
}
.anchor { position: relative; }
.cell-drop { position: absolute; left: 0; bottom: 0; width: 21px; height: 21px; border: 1px solid #ababab; background: linear-gradient(#fff, #f0f2f7); }
.cell-drop .caret { border-width: 4px; border-bottom-width: 0; }

/* Scroll bars */
.arr { width: 0; height: 0; border: 5px solid transparent; }
.arr.up { border-top: 0; border-bottom-color: #777; }
.arr.down { border-bottom: 0; border-top-color: #777; }
.arr.left { border-left: 0; border-right-color: #777; }
.arr.right { border-right: 0; border-left-color: #777; }
.vscroll { width: 25px; padding: 8px 3px 0; display: flex; flex-direction: column; }
.vscroll button, .hscroll button { width: 19px; height: 19px; flex: none; background: #fff; border: 1px solid #c6c6c6; }
.vscroll .track { flex: 1; background: #dadada; }
.vscroll .thumb { height: 96%; background: #fff; border: 1px solid #ababab; }
.hscroll { display: flex; align-items: center; margin-left: auto; width: 49vw; min-width: 300px; padding-left: 4px; }
.hscroll .track { flex: 1; height: 19px; margin-right: 2px; background: #dadada; }
.hscroll .thumb { width: 83%; height: 19px; background: #fff; border: 1px solid #ababab; }

/* Sheet tabs and status bar */
.sheetbar { display: flex; height: 29px; padding-right: 23px; }
.nav { display: flex; align-items: center; gap: 20px; width: 103px; padding: 0 0 2px 27px; }
.nav .arr { border-width: 5px; opacity: 0.4; }
.nav .arr.left { border-left-width: 0; }
.nav .arr.right { border-right-width: 0; }
.nav button { width: 8px; }
.sheet-tabs { display: flex; height: 26px; font-size: 16px; line-height: 21px; color: #444; white-space: nowrap; }
.sheet-tabs a { padding: 0 15px; background: linear-gradient(#ababab, #ababab) right bottom / 1px 22px no-repeat; }
.sheet-tabs .current { padding: 0 11px; font-size: 15px; font-weight: bold; color: #217346; background: #fff; border: 1px solid #ababab; border-top: 0; border-bottom: 2px solid #217346; }
.add { width: 22px; height: 29px; margin-left: 32px; }
.hscroll .dots { margin: 0 15px 0 0; }
.status { display: flex; align-items: center; height: 28px; padding: 0 10px 0 7px; font-size: 12px; background: #f3f3f3; border-top: 1px solid #c6c6c6; }
.views { display: flex; margin-left: auto; }
.views button { width: 42px; height: 27px; }
.zoom { display: flex; align-items: center; gap: 4px; margin-left: 4px; }
.zoom input { appearance: none; width: 124px; height: 14px; background: linear-gradient(#b0b0b0, #b0b0b0) center / 100% 1px no-repeat; }
.zoom input::-webkit-slider-thumb { appearance: none; width: 6px; height: 14px; background: #666; }
.zoom span { margin-left: 8px; }
```
